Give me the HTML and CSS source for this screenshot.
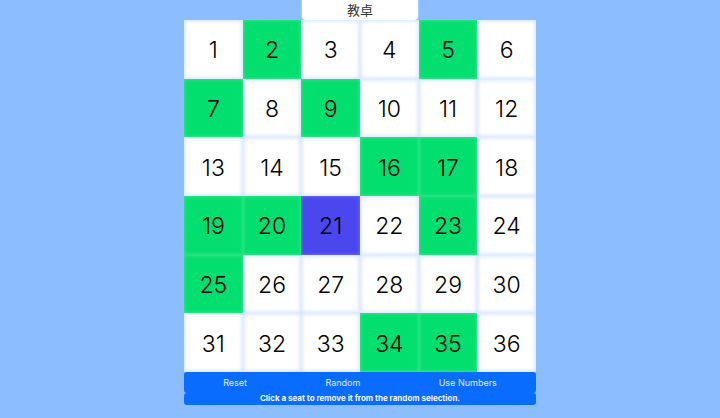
FILE: index.html
```html
<!DOCTYPE html>
<html lang="zh">
<head>
    <meta charset="UTF-8">
    <title>Seat Picker</title>
    <link rel="stylesheet" href="styles.css">
</head>
<body>
    <div class="room">
        <div class="desk">教卓</div>

        <div class="seats">
            <div class="seat">1</div>
            <div class="seat on">2</div>
            <div class="seat">3</div>
            <div class="seat">4</div>
            <div class="seat on">5</div>
            <div class="seat">6</div>
            <div class="seat on">7</div>
            <div class="seat">8</div>
            <div class="seat on">9</div>
            <div class="seat">10</div>
            <div class="seat">11</div>
            <div class="seat">12</div>
            <div class="seat">13</div>
            <div class="seat">14</div>
            <div class="seat">15</div>
            <div class="seat on">16</div>
            <div class="seat on">17</div>
            <div class="seat">18</div>
            <div class="seat on">19</div>
            <div class="seat on">20</div>
            <div class="seat picked">21</div>
            <div class="seat">22</div>
            <div class="seat on">23</div>
            <div class="seat">24</div>
            <div class="seat on">25</div>
            <div class="seat">26</div>
            <div class="seat">27</div>
            <div class="seat">28</div>
            <div class="seat">29</div>
            <div class="seat">30</div>
            <div class="seat">31</div>
            <div class="seat">32</div>
            <div class="seat">33</div>
            <div class="seat on">34</div>
            <div class="seat on">35</div>
            <div class="seat">36</div>
        </div>

        <div class="controls">
            <button>Reset</button>
            <button>Random</button>
            <button>Use Numbers</button>
        </div>
        <div class="hint">Click a seat to remove it from the random selection.</div>
    </div>
</body>
</html>
```

FILE: styles.css
```css
body {
    margin: 0;
    background: #8bbdff;
    font-family: Inter, "Noto Sans CJK SC", sans-serif;
    color: #111;
}

.room {
    width: 352px;
    margin: 0 auto;
    display: flex;
    flex-direction: column;
}

.desk {
    align-self: center;
    width: 116px;
    height: 20px;
    line-height: 21px;
    background: #fff;
    text-align: center;
    font-size: 13px;
    color: #333;
    border-radius: 0 0 4px 4px;
    box-shadow: 0 0 3px #cfe0ff;
}

.seats {
    display: grid;
    grid-template-columns: repeat(6, 1fr);
    grid-auto-rows: 58.67px;
}

.seat {
    display: flex;
    align-items: center;
    justify-content: center;
    padding-top: 2px;
    background: #fff;
    font-size: 23px;
    font-weight: 300;
    color: #000;
    box-shadow: inset 0 0 4px 1px #cfe0ff;
}

.seat.on {
    background: #03df6f;
    box-shadow: inset 0 0 3px 1px #34e488;
}

.seat.picked {
    background: #4a47ef;
    box-shadow: inset 0 0 3px 1px #6a6af5;
}

.controls {
    display: flex;
    justify-content: space-around;
    height: 21px;
    align-items: center;
    background: #0a6bff;
    border-radius: 3px;
}

.controls button {
    background: none;
    border: none;
    padding: 0;
    font-family: inherit;
    font-size: 9px;
    color: #e2ecff;
    cursor: pointer;
}

.hint {
    height: 12px;
    line-height: 11px;
    background: #0a6bff;
    border-radius: 3px;
    text-align: center;
    font-size: 8px;
    font-weight: 700;
    color: #f2f6ff;
}
```
